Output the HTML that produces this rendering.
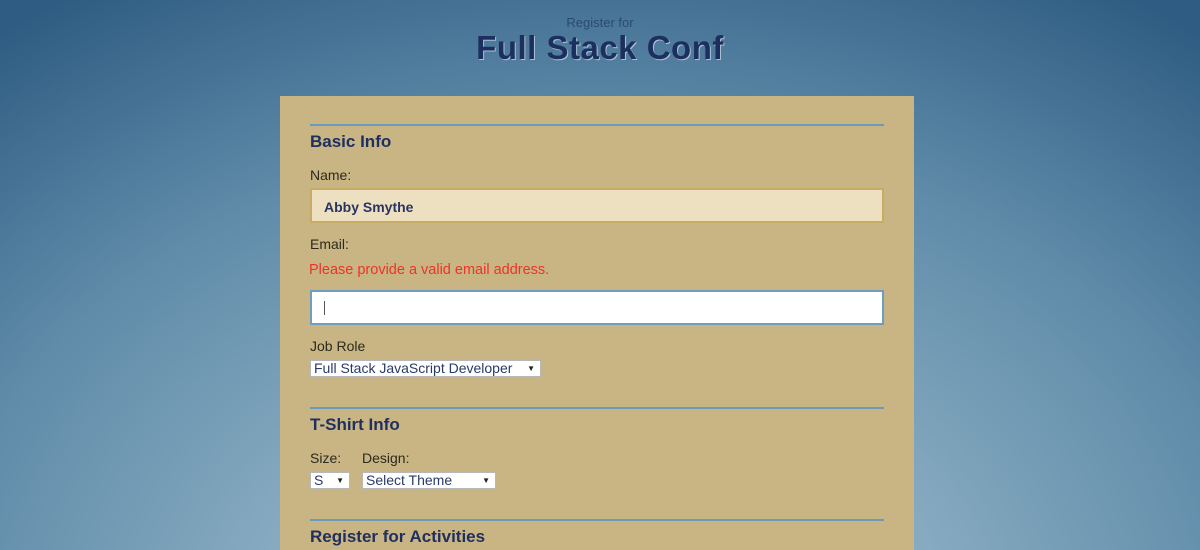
<!DOCTYPE html>
<html><head><style>
*{margin:0;padding:0;box-sizing:border-box}
html,body{width:1200px;height:550px;overflow:hidden}
html{background:#2e5c82}
body{font-family:"Liberation Sans",sans-serif;
background:radial-gradient(ellipse 1000px 760px at 600px 640px,#a4c2d4 0%,#86aac0 35%,#5e8aa8 68%,#2e5c82 100%);position:relative}
.a{position:absolute;white-space:nowrap}
.panel{position:absolute;left:280px;top:96px;width:634px;height:460px;background:#c9b583}
.line{position:absolute;left:310px;width:574px;height:2px;background:#6b9bb8}
h2{position:absolute;font-size:17px;font-weight:bold;color:#1f3060;left:310px;white-space:nowrap}
.lbl{position:absolute;font-size:14px;color:#2b2a1e;white-space:nowrap}
.sel{position:absolute;background:#fff;border:1px solid #b8b8b8;font-size:14px;color:#2a3a66;height:17px;line-height:15px;padding-left:3px;white-space:nowrap}
.sel span{position:absolute;right:5px;top:0;font-size:8px;color:#222}
</style></head><body>
<div class="a" style="left:0;width:1200px;text-align:center;top:15px;font-size:13px;color:#2b4a72">Register for</div>
<div class="a" style="left:0;width:1200px;text-align:center;top:29px;font-size:33px;font-weight:bold;letter-spacing:0.5px;color:#1d2f5e;text-shadow:1px 1px 0 #a9c0d0">Full Stack Conf</div>
<div class="panel"></div>
<div class="line" style="top:124px"></div>
<h2 style="top:132px">Basic Info</h2>
<div class="lbl" style="left:310px;top:167px">Name:</div>
<div class="a" style="left:310px;top:188px;width:574px;height:35px;background:#ede0c1;border:2px solid #c8ab64;font-size:14px;font-weight:bold;color:#2a3462;padding:9px 0 0 12px">Abby Smythe</div>
<div class="lbl" style="left:310px;top:236px">Email:</div>
<div class="a" style="left:309px;top:262px;font-size:14.5px;color:#ee3327">Please provide a valid email address.</div>
<div class="a" style="left:310px;top:290px;width:574px;height:35px;background:#fff;border:2px solid #6e9dbf"><div style="position:absolute;left:12px;top:9px;width:1px;height:14px;background:#555"></div></div>
<div class="lbl" style="left:310px;top:338px">Job Role</div>
<div class="sel" style="left:310px;top:360px;width:231px">Full Stack JavaScript Developer<span>▼</span></div>
<div class="line" style="top:407px"></div>
<h2 style="top:415px">T-Shirt Info</h2>
<div class="lbl" style="left:310px;top:450px">Size:</div>
<div class="lbl" style="left:362px;top:450px">Design:</div>
<div class="sel" style="left:310px;top:472px;width:40px">S<span>▼</span></div>
<div class="sel" style="left:362px;top:472px;width:134px">Select Theme<span>▼</span></div>
<div class="line" style="top:519px"></div>
<h2 style="top:527px">Register for Activities</h2>
</body></html>
